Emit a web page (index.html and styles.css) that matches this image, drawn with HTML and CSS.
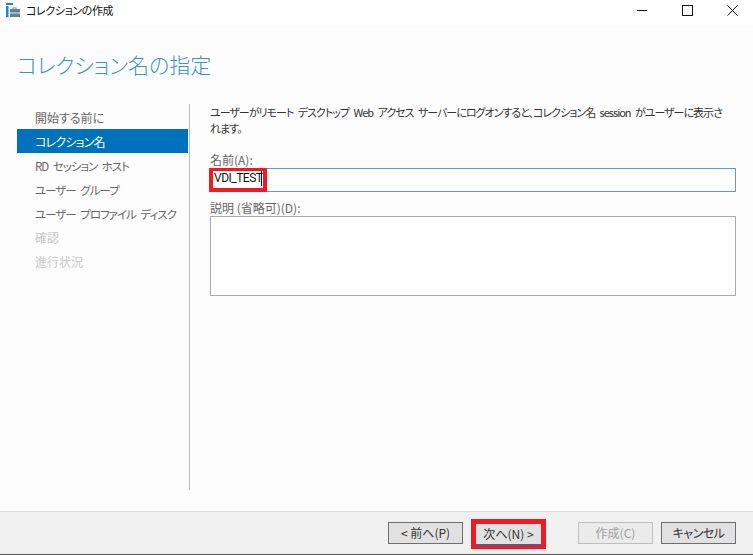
FILE: index.html
```html
<!DOCTYPE html>
<html lang="ja">
<head>
<meta charset="utf-8">
<title>コレクションの作成</title>
<link rel="stylesheet" href="styles.css">
</head>
<body>
<div class="window">
  <header class="titlebar">
    <svg class="app-icon" width="14" height="14" viewBox="0 0 14 14"><path d="M0 0h7v2H0z" fill="#1b87d8"/><path d="M0 3h2.500v11H0z" fill="#1b87d8"/><path d="M4 6h2.500V4.500h4V6H14v8H4z" fill="#5d8397"/><path d="M4 9.500h10v1H4z" fill="#dfe8ee"/><path d="M7.500 5.300h2V6h-2z" fill="#fff"/></svg>
    <span class="title">コレクションの作成</span>
    <div class="controls">
      <svg class="ctl" width="11" height="11" viewBox="0 0 11 11"><path d="M0 5.500h10" stroke="#111" fill="none"/></svg>
      <svg class="ctl" width="11" height="11" viewBox="0 0 11 11"><rect x="0.500" y="0.500" width="10" height="10" stroke="#111" fill="none"/></svg>
      <svg class="ctl" width="11" height="11" viewBox="0 0 11 11"><path d="M0.500 0.500l10 10M10.500 0.500l-10 10" stroke="#111" fill="none"/></svg>
    </div>
  </header>
  <main class="content">
    <h1 class="heading">コレクション名の指定</h1>
    <div class="columns">
      <nav class="steps">
        <div class="step">開始する前に</div>
        <div class="step active">コレクション名</div>
        <div class="step kana">RD セッション ホスト</div>
        <div class="step kana">ユーザー グループ</div>
        <div class="step kana">ユーザー プロファイル ディスク</div>
        <div class="step off">確認</div>
        <div class="step off">進行状況</div>
      </nav>
      <section class="form">
        <p class="desc">ユーザーがリモート デスクトップ Web アクセス サーバーにログオンすると、コレクション名 session がユーザーに表示されます。</p>
        <label class="label name-label">名前(A):</label>
        <div class="input">
          <span class="mark"><span class="value">VDI_TEST</span></span>
        </div>
        <label class="label desc-label">説明 (省略可)(D):</label>
        <div class="textarea"></div>
      </section>
    </div>
  </main>
  <footer class="footer">
    <button class="btn prev">&lt; 前へ(P)</button>
    <button class="btn next">次へ(N) &gt;</button>
    <button class="btn create" disabled>作成(C)</button>
    <button class="btn cancel">キャンセル</button>
  </footer>
</div>
</body>
</html>
```
FILE: styles.css
```css
* { box-sizing: border-box; }
html, body { margin: 0; padding: 0; }
body { width: 753px; height: 555px; overflow: hidden; background: #fff; font-family: "Noto Sans CJK JP", "Liberation Sans", sans-serif; font-size: 12px; color: #444; font-feature-settings: "palt"; }
.window { width: 753px; height: 555px; display: flex; flex-direction: column; }
.titlebar { height: 26px; flex: none; display: flex; align-items: flex-start; background: #fff; padding: 3px 0 0 6px; }
.app-icon { flex: none; }
.title { margin-left: 6px; font-size: 11px; letter-spacing: -0.4px; color: #111; line-height: 15px; }
.controls { margin-left: auto; display: flex; gap: 34px; padding: 2px 15px 0 0; }
.ctl { display: block; }
.content { flex: 1; background: #fcfcfc; min-height: 0; display: flex; flex-direction: column; }
.heading { margin: 0; padding: 23px 0 0 17px; height: 78px; font-size: 21px; font-weight: 300; line-height: 30px; color: #3a94bd; flex: none; }
.columns { display: flex; flex: 1; min-height: 0; }
.steps { width: 172px; margin-left: 17px; flex: none; padding-top: 1px; }
.step { width: 171px; height: 24px; line-height: 26px; padding-left: 18px; font-size: 12px; color: #666; white-space: nowrap; }
.step.kana { font-size: 11.5px; letter-spacing: -1px; word-spacing: 3px; }
.step.active { background: #0072bc; color: #fff; letter-spacing: -0.8px; }
.step.off { color: #c8c8c8; }
.form { width: 547px; height: 386px; border-left: 1px solid #bdbdbd; padding-left: 20px; }
.desc { margin: 0; font-size: 11px; letter-spacing: -1px; word-spacing: 3px; line-height: 16px; color: #333; width: 521px; }
.label { display: block; font-size: 12px; line-height: 16px; color: #666; }
.name-label { margin-top: 16px; }
.input { height: 24px; width: 526px; border: 1px solid #5b9bd5; background: #fff; position: relative; }
.mark { position: absolute; left: -2px; top: -1px; width: 58px; height: 24px; border: solid #ed1c24; border-width: 3px 4px 4px 4px; background: #fff; display: block; }
.value { display: block; width: 49px; padding-left: 1px; font-family: Roboto, sans-serif; font-size: 12px; letter-spacing: -0.5px; line-height: 15px; color: #111; border-right: 1px solid #111; white-space: nowrap; }
.desc-label { margin-top: 8px; }
.textarea { height: 80px; width: 526px; border: 1px solid #ababab; background: #fff; }
.footer { height: 44px; flex: none; background: #f0f0f0; border-top: 1px solid #dcdcdc; border-bottom: 1px solid #555; display: flex; align-items: flex-start; padding: 10px 0 0 388px; }
.btn { height: 22px; width: 75px; padding: 0; font-family: inherit; font-feature-settings: "palt"; font-size: 12px; line-height: 18px; background: #e1e1e1; border: 1px solid #6d6d6d; color: #333; }
.next { margin-left: 8px; height: 30px; margin-top: -3px; padding-bottom: 2px; border: solid #ed1c24; border-width: 5px 5px 4px 5px; box-shadow: inset 0 -1px 0 #0078d7; }
.create { margin-left: 32px; background: #ebebeb; border-color: #bfbfbf; color: #a0a0a0; }
.cancel { margin-left: 8px; letter-spacing: -0.5px; }
```
